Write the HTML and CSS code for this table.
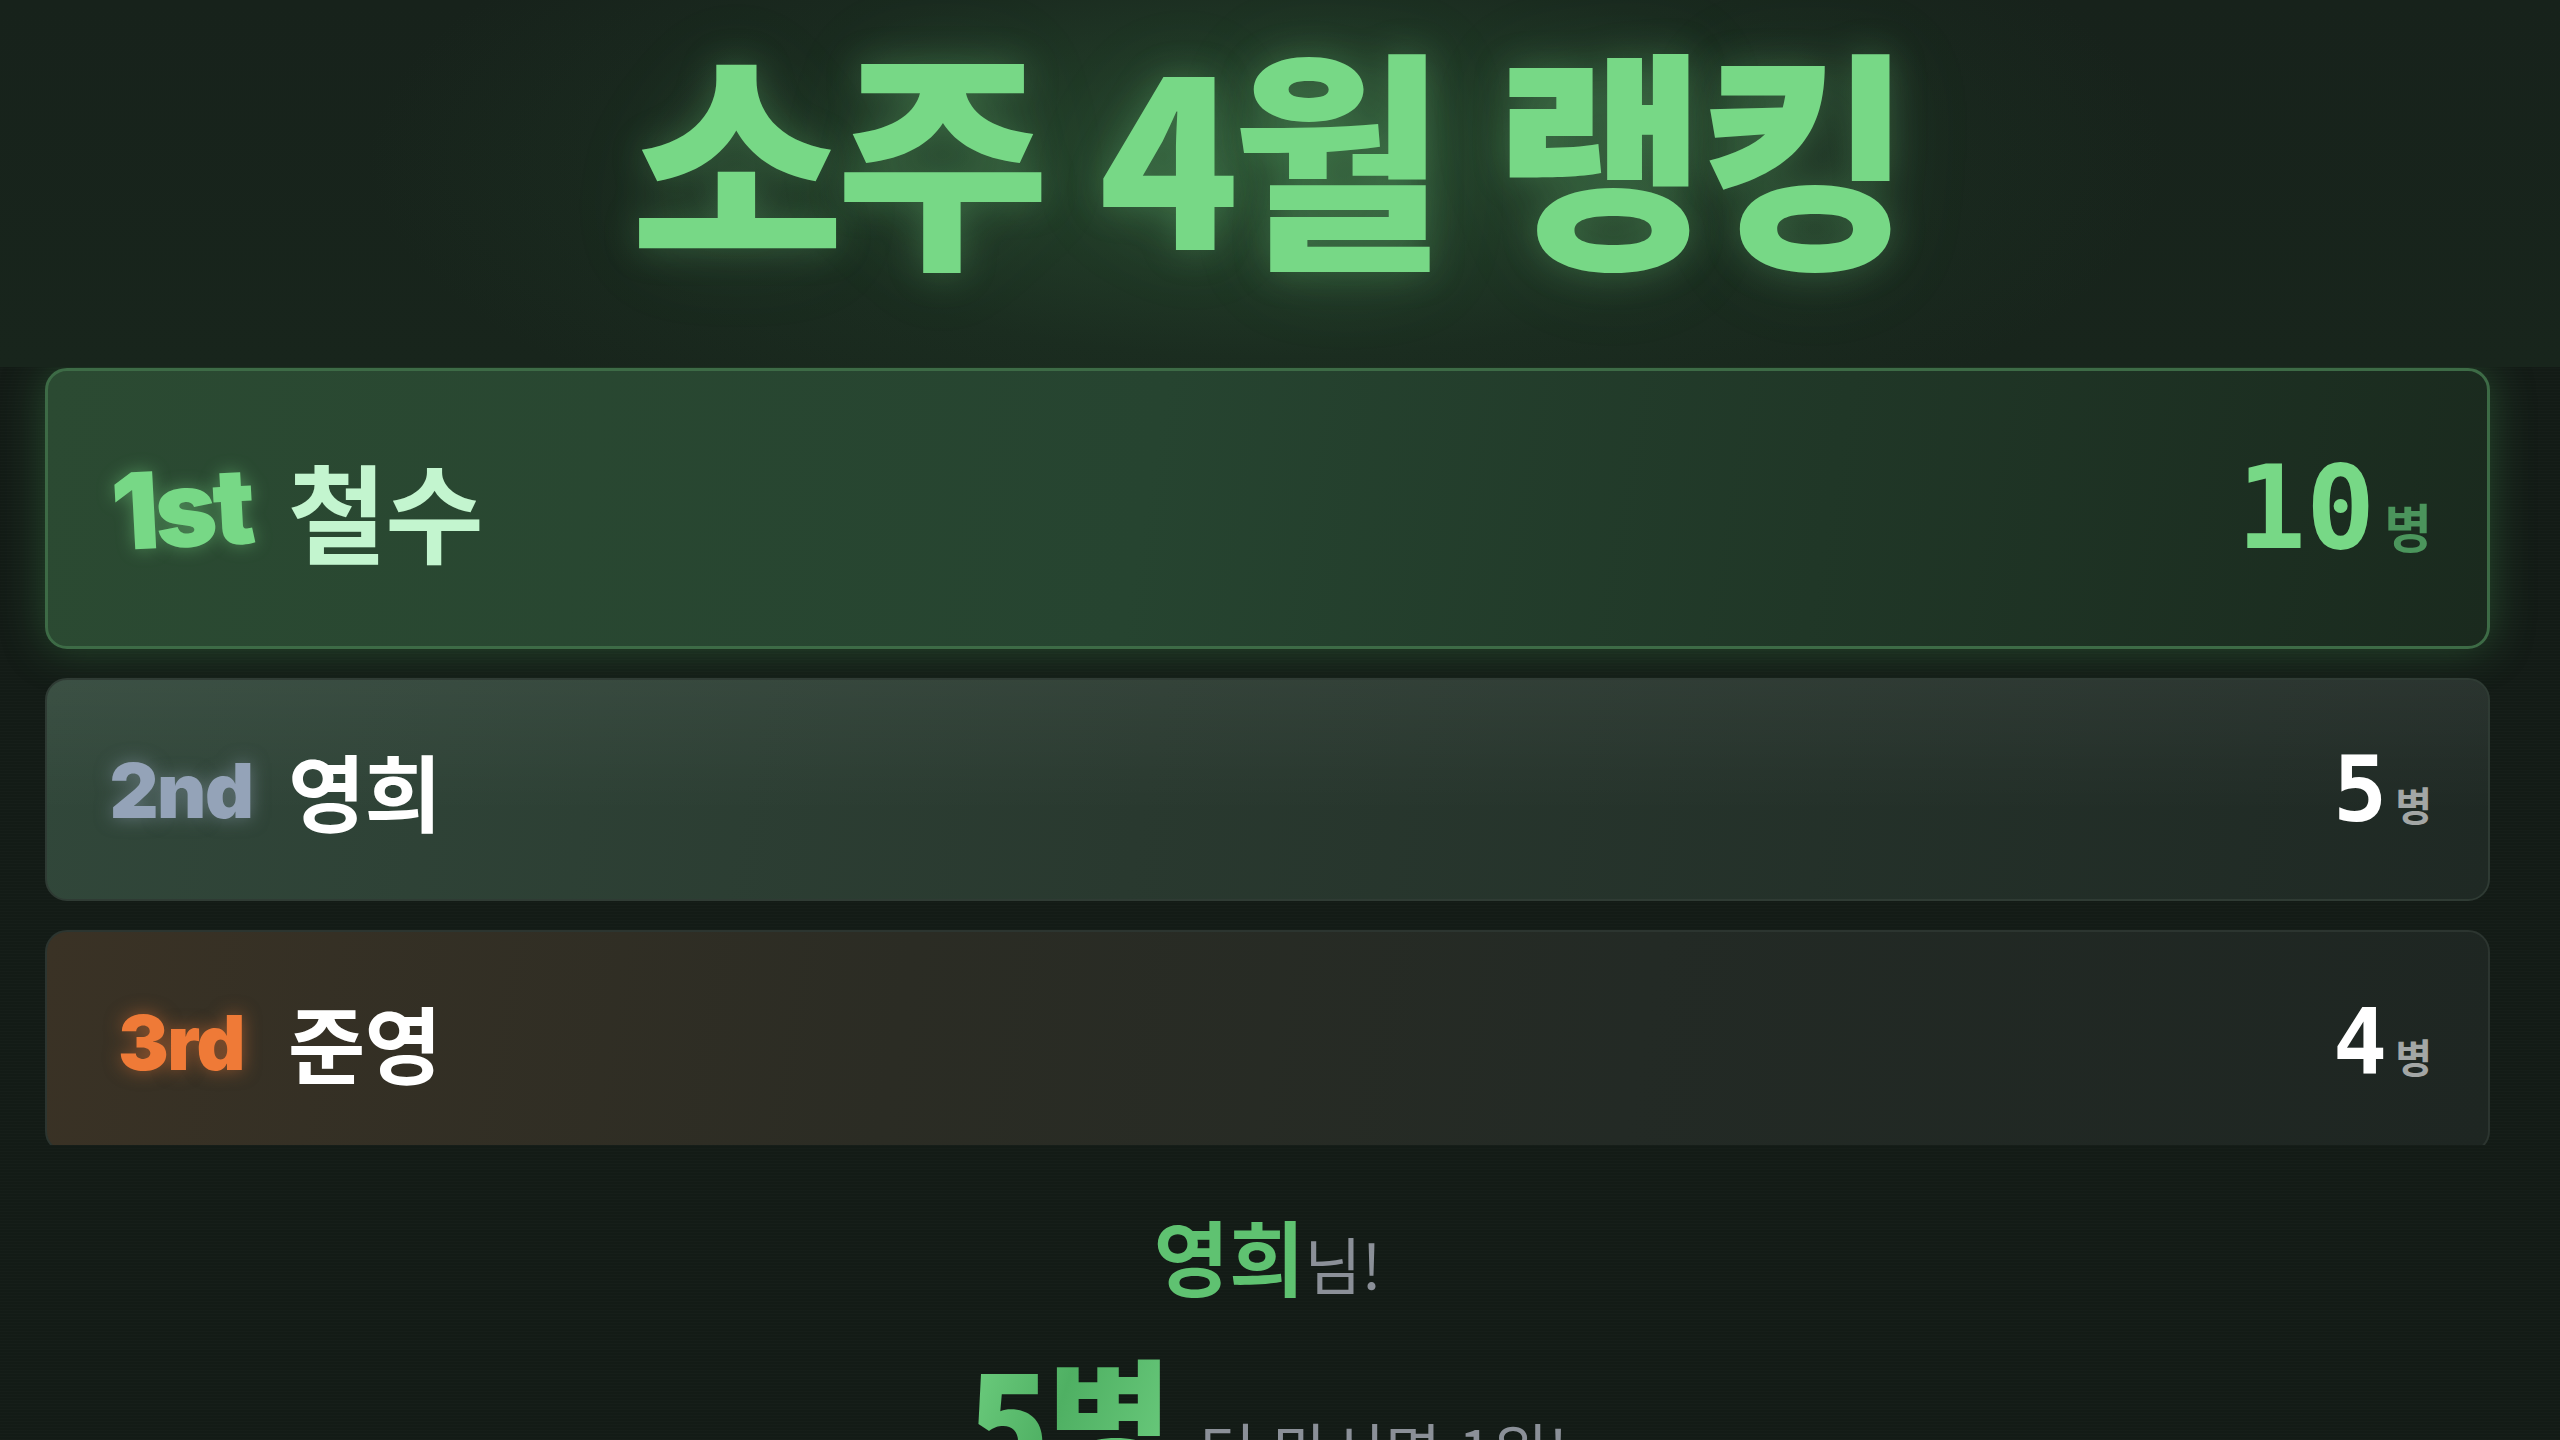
FILE: index.html
```html
<!DOCTYPE html>
<html lang="ko">
<head>
<meta charset="utf-8">
<title>소주 4월 랭킹</title>
<link rel="stylesheet" href="styles.css">
</head>
<body>
<div class="app">
  <header class="hero">
    <h1 class="title">소주 4월 랭킹</h1>
  </header>
  <main class="list">
    <div class="card card-first">
      <div class="who">
        <span class="rank rank-1">1st</span>
        <span class="name">철수</span>
      </div>
      <div class="score"><span class="num">10</span><span class="unit">병</span></div>
    </div>
    <div class="card card-second">
      <div class="who">
        <span class="rank rank-2">2nd</span>
        <span class="name">영희</span>
      </div>
      <div class="score"><span class="num">5</span><span class="unit">병</span></div>
    </div>
    <div class="card card-third">
      <div class="who">
        <span class="rank rank-3">3rd</span>
        <span class="name">준영</span>
      </div>
      <div class="score"><span class="num">4</span><span class="unit">병</span></div>
    </div>
  </main>
  <footer class="cheer">
    <p class="cheer-who"><span class="cheer-name">영희</span><span class="cheer-suffix">님!</span></p>
    <p class="cheer-line"><span class="cheer-big">5병</span><span class="cheer-rest">더 마시면 1위!</span></p>
  </footer>
</div>
</body>
</html>
```

FILE: styles.css
```css
* { box-sizing: border-box; }
html, body {
  margin: 0;
  padding: 0;
  background: #131b16;
  width: 2560px;
  height: 1440px;
  overflow: hidden;
}
body {
  font-family: "Noto Sans CJK KR", "Noto Sans", sans-serif;
  color: #ffffff;
}
.app {
  height: 1440px;
  overflow: hidden;
  display: flex;
  flex-direction: column;
  background:
    repeating-linear-gradient(0deg, rgba(255,255,255,0.012) 0px, rgba(255,255,255,0.012) 1px, transparent 1px, transparent 3px),
    #131b16;
}
.hero {
  height: 367px;
  flex: none;
  display: flex;
  align-items: center;
  justify-content: center;
  padding-right: 25px;
  padding-bottom: 70px;
  background:
    radial-gradient(ellipse 900px 330px at 1267px 160px, rgba(52, 102, 62, 0.55), rgba(40, 80, 50, 0.18) 60%, transparent 100%),
    linear-gradient(180deg, #17221b 0%, #18251c 100%);
}
.title {
  margin: 0;
  font-family: "Noto Sans CJK KR", sans-serif;
  font-weight: 900;
  font-size: 232px;
  line-height: 1;
  letter-spacing: -0.035em;
  color: #77d886;
  text-shadow: 0 0 36px rgba(119, 216, 134, 0.28), 0 0 90px rgba(119, 216, 134, 0.12);
}
.list {
  height: 778px;
  flex: none;
  overflow: hidden;
  padding: 1px 70px 0 45px;
  display: flex;
  flex-direction: column;
  gap: 29px;
}
.card {
  flex: none;
  display: flex;
  align-items: center;
  justify-content: space-between;
  border-radius: 22px;
  padding: 0 56px 0 54px;
}
.card-first {
  height: 281px;
  border: 3px solid #3d6b46;
  background: linear-gradient(100deg, #2b4a32 0%, #264430 45%, #1a2a1e 100%);
  box-shadow: 0 0 44px rgba(70, 150, 85, 0.38);
  padding-left: 53px;
  padding-right: 55px;
}
.card-second {
  height: 223px;
  border: 2px solid #2f3b34;
  background:
    linear-gradient(180deg, rgba(255,255,255,0.05) 0%, rgba(255,255,255,0) 60%),
    linear-gradient(100deg, #31473a 0%, #29392f 45%, #1f2924 100%);
}
.card-third {
  height: 223px;
  border: 2px solid #2c3530;
  background: linear-gradient(100deg, #3a3225 0%, #2b2c24 35%, #232a25 65%, #1e2622 100%);
}
.who {
  display: flex;
  align-items: center;
}
.rank {
  width: 160px;
  text-align: center;
  font-family: "Inter", sans-serif;
  font-weight: 900;
  font-size: 76px;
  line-height: 1;
  letter-spacing: -0.02em;
}
.rank-1 {
  font-size: 106px;
  color: #77d886;
  letter-spacing: -0.04em;
  text-shadow: 0 0 18px rgba(119, 216, 134, 0.45);
  transform: rotate(-3deg);
}
.rank-2 {
  color: #94a3b8;
  text-shadow: 0 0 18px rgba(148, 163, 184, 0.5);
}
.rank-3 {
  color: #ef7a37;
  text-shadow: 0 0 18px rgba(239, 122, 55, 0.5);
}
.name {
  margin-left: 27px;
  font-family: "Noto Sans CJK KR", sans-serif;
  font-weight: 700;
  font-size: 84px;
  line-height: 1;
  color: #ffffff;
  letter-spacing: -0.01em;
}
.card-first .name {
  font-size: 107px;
  color: #c3f5cf;
}
.score {
  display: flex;
  align-items: baseline;
}
.num {
  font-family: "DejaVu Sans Mono", monospace;
  font-weight: 700;
  font-size: 90px;
  line-height: 1;
  color: #ffffff;
}
.unit {
  margin-left: 8px;
  font-family: "Noto Sans CJK KR", sans-serif;
  font-weight: 700;
  font-size: 40px;
  line-height: 1;
  color: #a3a6a5;
}
.card-first .num {
  font-size: 115px;
  color: #77d886;
}
.card-first .unit {
  font-size: 52px;
  color: #4b955c;
  margin-left: 9px;
}
.cheer {
  flex: 1;
  display: flex;
  flex-direction: column;
  align-items: center;
  padding-right: 25px;
  padding-top: 69px;
}
.cheer p { margin: 0; }
.cheer-who {
  display: flex;
  align-items: baseline;
  line-height: 1;
}
.cheer-name {
  font-weight: 700;
  font-size: 82px;
  color: #5fc271;
}
.cheer-suffix {
  font-weight: 400;
  font-size: 62px;
  color: #8b9098;
}
.cheer-line {
  margin-top: 52px !important;
  display: flex;
  align-items: baseline;
  line-height: 1;
}
.cheer-big {
  font-weight: 900;
  font-size: 136px;
  background: linear-gradient(110deg, #6fcf80 0%, #4fb063 45%, #6ccc7e 100%);
  -webkit-background-clip: text;
  background-clip: text;
  color: transparent;
  letter-spacing: -0.02em;
}
.cheer-rest {
  margin-left: 30px;
  font-weight: 400;
  font-size: 61px;
  color: #8b9098;
}
```
